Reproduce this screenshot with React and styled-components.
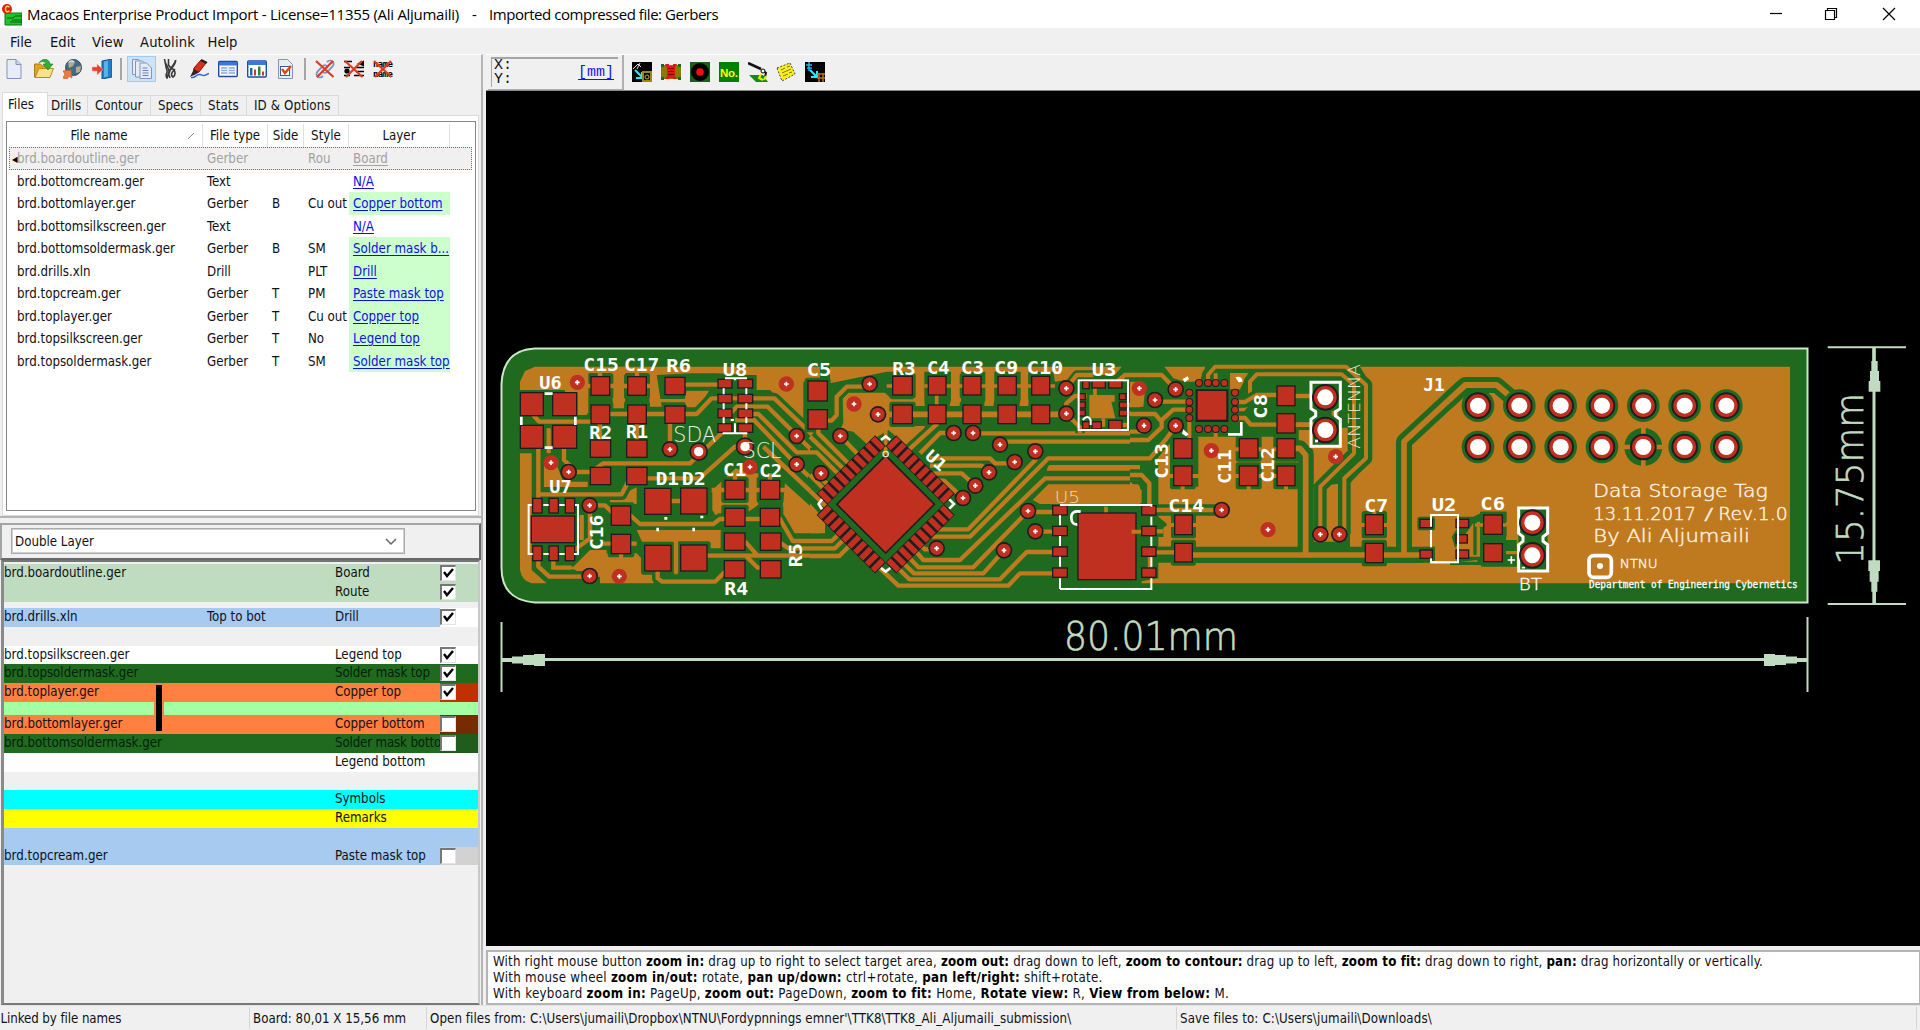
import React from 'react';
import styled, { createGlobalStyle } from 'styled-components';

const Global = createGlobalStyle`
  * { box-sizing: border-box; }
  body { margin: 0; background: #f0f0f0; overflow: hidden; }
`;
const ui = `'DejaVu Sans Condensed', 'DejaVu Sans', sans-serif`;

const Window = styled.div`
  width: 1920px; height: 1030px; display: flex; flex-direction: column;
  background: #f0f0f0; color: #101018; font: 13.2px ${ui}; font-stretch: condensed; white-space: pre;
`;
const TitleBar = styled.header`
  height: 28px; background: #fff; display: flex; align-items: center; padding-left: 2px; color: #000;
  font: 15px 'Open Sans', 'Noto Sans', sans-serif;
`;
const AppTitle = styled.span`margin-left: 5px; letter-spacing: ${p => p.$ls || 0}px; width: ${p => p.$w}px;`;
const Controls = styled.div`margin-left: auto; margin-right: 3px; display: flex; svg { width: 56.5px; height: 28px; }`;
const MenuBar = styled.nav`height: 26px; display: flex; align-items: center; padding-left: 10px; font-size: 14.6px;`;
const MenuItem = styled.span`width: ${p => p.$w}px; letter-spacing: ${p => p.$ls || 0}px;`;
const Body = styled.main`height: 951px; display: flex;`;
const Left = styled.section`width: 483px; border-right: 2px solid #b4b4b4; display: flex; flex-direction: column; border-top: 1px solid #fff;`;
const Right = styled.section`flex: 1; margin-left: 3px; display: flex; flex-direction: column;`;
const Toolbar = styled.div`height: 37px; display: flex; align-items: flex-start; padding: 1px 0 0 1px;`;
const Tool = styled.div`
  width: 28.8px; height: 26px; display: flex; align-items: center; justify-content: center;
  background: ${p => p.$on ? '#cce4f7' : 'transparent'}; outline: ${p => p.$on ? '1px solid #99cdf5' : 'none'}; outline-offset: -1px;
  svg { width: 20px; height: 20px; }
`;
const Sep = styled.i`width: 2px; height: 22px; margin: 2px 5px 0 4px; background: #a6a6a6;`;
const Tabs = styled.div`height: 23px; display: flex; align-items: flex-end; padding-left: 2px;`;
const Tab = styled.div`
  width: ${p => p.$w}px; height: ${p => p.$on ? 24 : 20}px; margin-bottom: ${p => p.$on ? -1 : 0}px;
  background: ${p => p.$on ? '#fff' : '#f0f0f0'}; border: 1px solid #dadada; border-bottom: 0; border-left-width: ${p => p.$on ? 1 : 0}px;
  display: flex; align-items: center; padding-left: ${p => p.$on ? 5 : p.$pad || 6}px; z-index: 1; letter-spacing: ${p => p.$ls || 0}px;
`;
const Pane = styled.div`height: 401px; margin: 0 2px 0 2px; background: #fff; border: 1px solid #dadada; padding: 5px 2px 4px 3px;`;
const List = styled.div`height: 390px; border: 1px solid #828790; padding: 2px 2px; background: #fff;`;
const cols = '194px 65px 36px 45px 101px 1fr';
const Head = styled.div`display: grid; grid-template-columns: ${cols}; height: 23px;`;
const HeadCell = styled.div`
  display: flex; align-items: center; justify-content: center; border-right: 1px solid #e0e0e0;
  padding-left: ${p => p.$pl || 0}px; svg { margin-left: 59px; }
`;
const Row = styled.div`
  display: grid; grid-template-columns: ${cols}; height: 22.52px; line-height: 23px; margin-right: 1px;
  ${p => p.$sel && 'background:#f0f0f0; color:#a2a2a2; outline:1px dotted #1785e0; outline-offset:-1px;'}
`;
const Cell = styled.span`padding-left: ${p => p.$pl}px; overflow: hidden; letter-spacing: ${p => p.$ls || 0}px;`;
const Mark = styled.span`color: #000; font-size: 8px; line-height: 1; margin-left: -5px; display: inline-block; width: 5px; vertical-align: 1px;`;
const LayerCell = styled.span`
  padding-left: 4px; overflow: hidden; background: ${p => p.$ok ? '#ccffcc' : 'transparent'};
  color: ${p => p.$dim ? '#a2a2a2' : '#0f0fe8'}; text-decoration: underline; text-underline-offset: 2px; letter-spacing: ${p => p.$ls || 0}px;
`;
const ComboPanel = styled.div`
  height: 37px; margin-top: 5px; border: 2px solid; border-color: #a4a4a4 #686868 #686868 #a4a4a4; padding: 3px 0 0 9px;
`;
const Divider = styled.div`height: 2px; background: #b4b4b4;`;
const Combo = styled.div`
  width: 394px; height: 26px; border: 1px solid #ababab; outline: 1px solid #d0d0d0; outline-offset: -2px; background: #fff; display: flex; align-items: center; padding: 1px 7px 0 3px;
  justify-content: space-between;
`;
const Layers = styled.div`
  position: relative; flex: 1; border: 2px solid; border-color: #747474 #c8c8c8 #787878 #8a8a8a; margin: 0 1px 0 1px; border-left-width: 3px; padding-top: 2px;
`;
const LRow = styled.div`
  height: ${p => p.$h || 18.76}px; background: ${p => p.$bg}; display: flex; line-height: 18px; color: ${p => p.$dark ? '#04200a' : '#101018'};
`;
const LName = styled.span`width: 203px;`;
const LMid = styled.span`width: 128px;`;
const LLayer = styled.span`width: 105px; overflow: hidden; letter-spacing: ${p => p.$ls || 0}px;`;
const Swatch = styled.span`flex: 1; background: ${p => p.$c}; padding-top: 1px;`;
const Check = styled.span`
  display: block; width: 16px; height: 16px; background: #fff; border: 1px solid #e4e4e4; border-top: 2px solid #777; border-left: 2px solid #777;
  svg { display: block; width: 12px; height: 12px; }
`;
const ViaBar = styled.i`position: absolute; left: 150px; top: 122px; width: 10px; height: 48px; background: #ff8040; border: solid #ff8040; border-width: 0 2px; &::after { content: ''; display: block; height: 46px; margin-top: 1px; background: #000; }`;
const RightBar = styled.div`height: 37px; display: flex; border-top: 1px solid #fff; border-bottom: 1px solid #888; align-items: flex-start; padding-left: 2px;`;
const Coord = styled.div`width: 136px; height: 35px; padding: 2px 4px 1px 3px; border-right: 2px solid #b0b0b0; border-bottom: 1px solid #b0b0b0; margin-right: 4px;`;
const CoordIn = styled.div`
  height: 30px; border-top: 2px solid #a6a6a6; border-left: 1px solid #a6a6a6; display: flex; justify-content: space-between; align-items: center;
  font: 15px/14px 'Liberation Mono', monospace; padding: 0 4px 0 2px;
`;
const Unit = styled.span`color: #1414f0; text-decoration: underline; text-underline-offset: 3px;`;
const RTool = styled(Tool)`align-items: flex-start; padding-top: 7px;`;
const Board = styled.div`height: 855px; background: #000; svg { display: block; }`;
const Help = styled.div`
  flex: 1; margin-top: 4px; background: #fff; border: 2px solid #b4b4b4; border-right-width: 1px; padding: 2px 0 0 5px;
`;
const HelpLine = styled.div`line-height: 16.2px; height: 16.2px; letter-spacing: ${p => p.$ls}px; b { color: #000; }`;
const Status = styled.footer`height: 25px; border-top: 1px solid #e4e4e4; display: flex; align-items: center;`;
const StatusItem = styled.span`width: ${p => p.$w}px; height: 22px; line-height: 23px; padding-left: ${p => p.$pl || 3}px; border-right: 1px solid #d6d6d6; letter-spacing: ${p => p.$ls || 0}px;`;

/* ---------- toolbar icons ---------- */
const I = ({ children }) => <svg viewBox="0 0 20 20">{children}</svg>;
const Page = ({ x = 3, y = 0, w = 14, h = 20 }) => (
  <path d={`M${x} ${y}h${w - 5}l5 5v${h - 5}h-${w}z`} fill="#e6ecf9" stroke="#8494bb" strokeWidth="1" />
);
const leftIcons = {
  neu: <I><Page x={2} y={.5} w={14} h={19} /><path d="M11 .5v5h5" fill="#c5d3ee" stroke="#8494bb" /></I>,
  open: <I><path d="M.5 18V5h6l2 2h7v11z" fill="#e3a51e" stroke="#a87a18" /><path d="M1 18.500l4-9h14.500l-3.500 9z" fill="#fbe28a" stroke="#b58a20" /><path d="M5 4C8-1 15-1 16 5h3l-5 6-5-6h3c-1-3-5-3-7-1" fill="#2fae3a" stroke="#1c741c" strokeWidth=".6" /></I>,
  globe: <I><circle cx="10.500" cy="8.500" r="8" fill="#3f6c86" stroke="#3a4a55" /><path d="M5 3q4-3 7 0l-2 4-4 2zM13 8l5-1-1 6-4 1z" fill="#b9a98e" /><path d="M6 3q3-2 5 0" stroke="#cde4f2" strokeWidth="1.500" fill="none" /><path d="M0 19l2-4-2-3 8-1 1 8-3-2-2 3z" fill="#f07a3c" stroke="#c05a22" strokeWidth=".7" /></I>,
  exit: <I><path d="M10 2l10-2v18l-10 2z" fill="#1f7fc8" stroke="#12558c" /><path d="M12 2.500l4-.8v15.600l-4 1.200z" fill="#58b2ea" /><path d="M0 8h5V5l6 5.500L5 16v-4H0z" fill="#e8402e" stroke="#f6b0a8" strokeWidth=".5" /></I>,
  docs: <I><Page x={.5} y={.5} w={11} h={15} /><Page x={3.5} y={2} w={12} h={16} /><Page x={8} y={4} w={11.5} h={15.5} /><path d="M10.500 9h5M10.500 11.500h6M10.500 14h6M10.500 16.500h6" stroke="#6880b8" /></I>,
  drill: <I><path d="M4.500 0c0 6 5 8 4.500 13l-2 6c-3-4 2-5-.5-9zM8.500 0v6l3 4M15.500 1c0 4-4 6-5 9M15.500 1c1 6-8 9-6.500 15l1 3M11 9c5 2 5 7 2 9-3-2-1-5 2-8" fill="none" stroke="#3a3a3a" strokeWidth="1.600" /></I>,
  pen: <I><path d="M5 9L12 1l5 3-7 9-6 3z" fill="#d8301c" stroke="#821008" /><path d="M12.500 0l6 3-1.500 2-5.500-3z" fill="#222" /><path d="M5 10l5 3-9 5z" fill="#2a2a2a" /><path d="M2 18.500c5 1 5-4 9-3s3 2 9-1" fill="none" stroke="#2f6ad0" strokeWidth="1.500" /></I>,
  table: <I><rect x=".7" y="2.500" width="18.600" height="15" rx="1" fill="#fff" stroke="#1c4fa0" strokeWidth="1.400" /><path d="M1 3h18v3.500H1z" fill="#3a78d8" /><path d="M3 9h6M3 11.500h6M3 14h6M11 9h6M11 11.500h6M11 14h6" stroke="#8ba8d8" strokeWidth="1.300" /><path d="M10 7v10" stroke="#c3d2ee" /></I>,
  chart: <I><rect x=".7" y="2" width="18.600" height="16" rx="1" fill="#fff" stroke="#1c4fa0" strokeWidth="1.400" /><path d="M1 2.500h18v3.500H1z" fill="#3a78d8" /><path d="M3 16.500V9h2.500v7.500z" fill="#1e6c9a" /><path d="M7 16.500v-6h2v6zM15 16.500v-4h2v4z" fill="#c83a2a" /><path d="M11 16.500v-9h2.500v9z" fill="#34803a" /></I>,
  check: <I><Page x={2.5} y={.5} w={14} h={19} /><rect x="4.500" y="7.500" width="9" height="9" fill="#fff" stroke="#3a5a98" /><path d="M6 10l3 4 6-7" fill="none" stroke="#e2431a" strokeWidth="2.400" /></I>,
};
const Cross = () => <path d="M1 2l17.500 16M18 2L2 18" stroke="#dc3c1e" strokeWidth="2.200" />;
leftIcons.unlink = <I><path d="M12 3c4-4 9 1 5 5l-5 5c-2 2-5 0-4-2M8 17c-4 4-9-1-5-5l5-5c2-2 5 0 4 2" fill="none" stroke="#7d92c4" strokeWidth="1.800" /><Cross /></I>;
leftIcons.unfile = <I><path d="M0 2.500h8M0 8.500h6M12 8.500h8M12 12.500h8M10 16.500h10M0 16.500h6" stroke="#000" strokeWidth="1.600" /><circle cx="3" cy="12" r="2.600" /><path d="M13 4.500l7-3v6z" /><Cross /></I>;
leftIcons.unname = <I><g fontFamily="DejaVu Sans Mono" fontWeight="700" fontSize="9"><text x="0" y="8" textLength="20">name</text><text x="0" y="17.500" textLength="20">name</text></g><Cross /></I>;

const rightIcons = [
  <I key="a"><path d="M0 0h20v20H0z" /><path d="M1 7l5-5 3 3M8 1l-3 6" stroke="#ddd" fill="none" /><path d="M3 8l7 7M10 10v6H4" stroke="#2ef" strokeWidth="2" fill="none" /><rect x="11" y="10" width="8" height="9" fill="none" stroke="#9a8a00" strokeWidth="2" /><circle cx="15" cy="15" r="2" fill="none" stroke="#c8b420" /></I>,
  <I key="b"><path d="M0 3h20v14H0z" fill="#8a7a00" /><path d="M0 2h3v3H0zM17 2h3v3h-3zM0 15h3v3H0zM17 15h3v3h-3z" fill="#176c20" /><path d="M4 2h4v2h4V2h4l-2 4v8l2 3h-4v-1H8v1H4l2-3V6z" fill="#e31515" /><path d="M7 6.500h6M7 9.500h6M7 12.500h6" stroke="#850000" /></I>,
  <I key="c"><path d="M0 0h20v20H0z" fill="#18601c" /><circle cx="10" cy="10" r="9" /><circle cx="10" cy="10" r="3.800" fill="#f01010" /></I>,
  <I key="d"><path d="M0 0h20v20H0z" fill="#008000" /><text x="1" y="14.500" fontFamily="Liberation Sans" fontWeight="700" fontSize="11.500" fill="#ff0" textLength="18">No.</text></I>,
  <I key="e"><path d="M1 13h14l5 7H8z" fill="#118a22" /><path d="M0 1l13 6" fill="none" stroke="#111" strokeWidth="2.600" /><path d="M14 8l4 3-1 4" stroke="#111" strokeWidth="2" fill="none" /><circle cx="15" cy="9" r="2" fill="#fff" stroke="#000" /><path d="M13 12l-2 4 4 2M18 14l-2 4" fill="none" stroke="#e8e800" strokeWidth="2" /></I>,
  <I key="f"><path d="M1 6L14 1l5 11L6 19z" fill="#f8f020" stroke="#444" strokeDasharray="2 1.500" /><path d="M5 8l4-2M11 5l3-1M6 11l9-4M7 14l5-2M13 11l3-1" stroke="#807800" /></I>,
  <I key="g"><path d="M0 0h20v20H0z" /><path d="M4 0v9M1 3h6M2 6h5" stroke="#2be" strokeWidth="1.400" /><path d="M5 8l6 6M12 9v6H6" stroke="#2ef" strokeWidth="2" fill="none" /><path d="M12 12h8M12 16h8M14 11v9M18 11v9" stroke="#c06a28" strokeWidth="1.500" /></I>,
];

/* ---------- board drawing ---------- */
const CU = '#bf7a1f', GR = '#206a20', RD = '#c03020', DK = '#201c20', DIM = '#c0dcc0';

const Pads = ({ list }) => (
  <>
    {list.map(([x, y, w, h], i) => <rect key={'d' + i} x={x - 4} y={y - 4} width={w + 8} height={h + 8} fill={DK} />)}
    {list.map(([x, y, w, h], i) => <rect key={i} x={x} y={y} width={w} height={h} fill={RD} />)}
  </>
);
const Vias = ({ list }) => list.map(([x, y, bare], i) => (
  <g key={i}>
    {!bare && <circle cx={x} cy={y} r="25" fill={DK} />}
    <circle cx={x} cy={y} r={bare ? 23 : 20} fill={RD} />
    <path d={`M${x - 7} ${y}h14M${x} ${y - 7}v14`} stroke="#fff" strokeWidth="5" />
  </g>
));
const Halos = ({ list, g = 15 }) => list.map(([x, y, w, h], i) => (
  <rect key={i} x={x - g} y={y - g} width={w + 2 * g} height={h + 2 * g} rx="8" fill={GR} />
));
const Traces = ({ d, w = 13, halo }) => (
  <g fill="none" strokeLinejoin="round">
    {halo && <path d={d} stroke={GR} strokeWidth={halo} />}
    <path d={d} stroke={CU} strokeWidth={w} />
  </g>
);
/* x, y = left end of the baseline; h = cap height; w = run length */
const Silk = ({ x, y, w, h = 37, thin, rot, wt, fill = '#fff', children }) => (
  <text x="0" y="0" transform={`translate(${x} ${y})${rot ? ` rotate(${rot})` : ''}`} textLength={w} lengthAdjust="spacingAndGlyphs"
    fontSize={h / 0.729} fill={fill} fontFamily={thin ? "'DejaVu Sans Light', 'DejaVu Sans', sans-serif" : "'DejaVu Sans Mono', monospace"}
    fontWeight={wt || (thin ? 200 : 700)}>{children}</text>
);
const Section = ({ x, children }) => <g transform={`translate(${x} 340) scale(.33333)`}>{children}</g>;

const padsA = [
  [93, 160, 65, 65], [190, 160, 68, 65], [93, 258, 65, 65], [190, 258, 68, 65],
  [305, 112, 52, 52], [305, 197, 52, 52], [415, 112, 52, 52], [415, 197, 52, 52],
  [527, 114, 56, 48], [527, 200, 56, 48], [303, 302, 57, 48], [303, 384, 57, 48], [412, 302, 57, 48], [412, 384, 57, 48],
  [366, 500, 54, 54], [366, 585, 54, 54], [466, 447, 75, 74], [466, 618, 75, 73], [574, 446, 75, 74], [574, 617, 75, 74],
  [707, 423, 56, 53], [813, 423, 54, 53], [707, 507, 56, 50], [813, 507, 54, 50],
  [705, 581, 58, 48], [813, 581, 58, 48], [705, 664, 58, 48], [813, 664, 58, 48],
];
const smallA = [
  ...[120, 165, 209, 253].flatMap(y => [[686, y, 38, 22], [746, y, 40, 22]]),
  [130, 477, 24, 40], [179, 477, 24, 40], [228, 477, 24, 40], [126, 530, 126, 76], [130, 620, 24, 40], [179, 620, 24, 40], [228, 620, 24, 40],
];
const viasA = [[262, 127, 1], [540, 328], [183, 368, 1], [236, 396], [299, 496], [299, 708], [388, 709, 1], [889, 132, 1], [920, 288], [920, 373], [780, 381, 1], [993, 400]];
const padsB = [[-4, 125, 54, 56], [-4, 211, 54, 54], ...[[250, 55], [357, 49], [461, 50], [566, 51], [667, 50]].flatMap(([x, w]) => [[x, 111, w, 52], [x, 197, w, 52]])];
const smallB = [
  [730, 499, 40, 24], [730, 561, 40, 24], [730, 623, 40, 24], [730, 686, 40, 24], [806, 521, 170, 196],
  [820, 126, 16, 18], [848, 124, 36, 18], [898, 124, 36, 18], [820, 247, 16, 18], [848, 247, 24, 18], [898, 243, 36, 24],
  [808, 163, 16, 14], [808, 188, 16, 14], [808, 212, 16, 14], [930, 163, 16, 14], [930, 188, 22, 14], [930, 212, 22, 14],
];
const viasB = [[179, 132], [132, 192, 1], [204, 223], [91, 288], [33, 400], [431, 279], [489, 279], [570, 314], [614, 366], [676, 334], [537, 397], [496, 437], [459, 474], [654, 513], [676, 574], [582, 631], [380, 625], [769, 145], [769, 221]];
const padsC = [[133, 298, 51, 55], [133, 380, 51, 55], [443, 140, 50, 55], [443, 223, 50, 54], [330, 298, 52, 54], [330, 380, 52, 55], [443, 298, 50, 54], [443, 380, 50, 55], [136, 527, 49, 55], [136, 612, 49, 52], [708, 526, 50, 56], [708, 612, 50, 54]];
const smallC = [[37, 499, 39, 24], [37, 561, 39, 24], [37, 623, 39, 24], [37, 686, 39, 24], [872, 540, 33, 21], [872, 632, 33, 21]];
const viasC = [[28, 145, 1], [75, 180], [137, 148], [42, 257], [137, 257], [244, 332, 1], [617, 350, 1], [275, 510], [414, 569, 1], [571, 583], [628, 583]];
const padsD = [[103, 527, 52, 54], [103, 613, 52, 50]];
const smallD = [[20, 540, 34, 21], [20, 586, 30, 21], [20, 632, 34, 21]];
const pinX = [84, 208, 332, 456, 580, 704, 829];

const Pin = ({ x, y, r = 34 }) => <g><circle cx={x} cy={y} r={r + 6} fill={DK} /><circle cx={x} cy={y} r={r} fill={RD} /><circle cx={x} cy={y} r="24" fill="#fff" /></g>;

const Pcb = () => (
  <svg width="1434" height="854" viewBox="486 91 1434 854">
    <path d="M535 348.500H1807.500V602.500H535Q501.500 600 501.500 568V384Q503 350 535 348.500z" fill={GR} stroke="#c8e8c8" strokeWidth="2" />
    {/* copper pours */}
    <Section x={490}>
      <g fill={CU}>
        <path d="M90 125l15-32 30-13H990V125H940V240L840 150H800V105H775L680 100H600L500 105 515 200H478V105H405V207H368V105H292V225H262V160H225V150H90z" />
        <path d="M590 152h67l-30 50h-35l-8-15h-90v-10h90zM90 340h35V690l45 40H125q-30-8-35-40zM162 375h38l20 50h73v16H162zM190 680h60l50-50h50v30h60l55 35v15H300l-50-22h-60zM440 570H695V625H655V700h-60v-82h-45l15 85h-15l-15-40-80-60zM775 400h30v95l-30 20-15-20v60h-65l-28-45v-60l70-65zM885 430l105 95v55h-90l-25-45zM360 480l80-38v50h-80zM330 640h110l60 65-10 25H330z" />
      </g>
      <Halos list={padsA.slice(4, 8)} g={13} />
      <Halos list={padsA.slice(14, 28)} g={13} />
      <path d="M400 80V105M290 90v130" stroke={CU} strokeWidth="10" />
      <Traces halo={34} d="M130 225L147 245H325M325 222H620L665 175H760M583 134H720M760 175H853L1010 325M720 222L740 200H833L1010 375M765 222H805L920 337H990M735 240H792L920 375 990 440M765 265V320H735L640 405 630 415H420L395 463H145M303 396L340 370H600L626 345 700 275M145 320V475M176 265V340M222 325V360L260 396H310M145 655V680L178 710H299M299 496H345L370 520M420 525L450 552H670L690 537H870L908 603H990M765 604L803 647H650M870 608L895 625H990M650 647H990M765 645L803 683H830M503 690V715L517 725H675L705 695M240 640L300 595V520M820 320L1000 490" />
      <path d="M540 250V325M558 600V700M330 90V115M441 90V115M283 138H500M190 660V683H245M735 400V425M840 400V425M665 450H890M275 525V600M330 225V300M441 225V300M540 483H575M393 635V655M340 611H440" stroke={CU} strokeWidth="13" fill="none" />
      <Pads list={padsA} /><Pads list={smallA} /><Vias list={viasA} />
      {[[626, 335], [765, 320]].map(([x, y]) => <g key={x}><circle cx={x} cy={y} r="28" fill={DK} /><circle cx={x} cy={y} r="23" fill={RD} /><circle cx={x} cy={y} r="14" fill="#fff" /></g>)}
      <g stroke="#fff" fill="none" strokeWidth="6">
        <path d="M164 161h24M164 323h24M94 230v25M256 230v25" strokeWidth="8" />
        <path d="M705 115h66M698 280h74M735 115v6M701 145v18M769 145v18M701 190v18M769 190v18M701 232v18M769 232v18M735 250v28M722 240h10" />
        <path d="M125 495h-9V642h12M160 495h16M208 495h16M255 495h9V642h-12M160 642h16M208 642h16" />
        <path d="M503 563v11M611 563v11M523 535h9M631 531h9" strokeWidth="8" />
      </g>
      <Silk x={148} y={146} w={67}>U6</Silk><Silk x={280} y={94} w={107}>C15</Silk><Silk x={402} y={94} w={106}>C17</Silk>
      <Silk x={529} y={97} w={74}>R6</Silk><Silk x={698} y={108} w={74}>U8</Silk><Silk x={298} y={297} w={68}>R2</Silk><Silk x={408} y={294} w={66}>R1</Silk>
      <Silk x={550} y={305} w={128} h={48} thin fill="#e8f0e0">SDA</Silk><Silk x={758} y={353} w={116} h={48} thin fill="#e8f0e0">SCL</Silk>
      <Silk x={699} y={409} w={70}>C1</Silk><Silk x={808} y={411} w={68}>C2</Silk><Silk x={497} y={435} w={70}>D1</Silk><Silk x={575} y={435} w={72}>D2</Silk>
      <Silk x={178} y={458} w={67}>U7</Silk><Silk x={338} y={630} w={106} rot={-90}>C16</Silk><Silk x={937} y={682} w={72} rot={-90}>R5</Silk><Silk x={703} y={765} w={72}>R4</Silk>
    </Section>
    <Section x={810}>
      <g fill={CU}>
        <path d="M60 80H935L915 105H855L735 125 730 95H655V180l3 18H626l6-18V95H553V180l-3 18H520l6-18V95H453V180l-2 18H418l5-18V95H343V183l2 15H310V95H230L60 130z" />
        <path d="M98 175l18-17H225l20 20h75v20h-75v60h100l-5 20-45 42-60-50-35 22-20 28-50-45-38-7 8-20zM715 375H990v17H710zM715 433H985l5 8V492H690l-22-12zM0 490l45 50v40H0zM838 165h76v20h-10l12 50h-78z" />
      </g>
      <Halos list={padsB} g={12} />
      <Traces halo={33} d="M179 140H110L80 170V225L65 242H40M489 280H990M431 279H390L330 340M570 305H990M360 355H540L555 370H614M360 377H515L537 397M370 400H455L496 437M375 422H402L459 474M676 334V360L475 568H385M990 355H715L480 590H365M990 415H705L450 660H340L310 625M654 513L490 682H325L285 640M582 631L520 700H312L265 655M740 636H650L570 718H298L245 665M740 700H630L595 737H265L205 680M383 250L290 335M654 516H740M676 575H740M380 628H345L320 605" />
      <Traces halo={28} d="M0 290L120 405M25 265V280L135 390M0 337H20L105 422M91 288L160 360M33 400V415L75 455M0 405L65 470M0 453L60 510M0 603H65L100 570M0 625H75L115 585M0 648H88L130 605M769 221L810 262V280M769 200V190L795 168H830M769 145L800 105H850M915 130L945 105H990M930 195H990M930 220H990M930 255H955" />
      <path d="M204 223H790" stroke={CU} strokeWidth="17" />
      <path d="M343 138H735M227 270V360M880 235V260M855 140V170M888 500V525M230 138H250M380 165V200" stroke={CU} strokeWidth="11" />
      <g transform="translate(227 493) rotate(45)">
        {[0, 90, 180, 270].map(a => (
          <g key={a} transform={`rotate(${a})`}>
            <rect x="-124" y="-169" width="248" height="46" fill={DK} />
            {Array.from({ length: 10 }, (_, i) => <rect key={i} x={-121 + i * 25} y="-167" width="17" height="42" fill={RD} />)}
          </g>
        ))}
        <rect x="-106" y="-106" width="212" height="212" fill={DK} /><rect x="-101" y="-101" width="202" height="202" fill={RD} />
      </g>
      <Pads list={padsB} /><Pads list={smallB} /><Vias list={viasB} />
      <g stroke="#fff" fill="none" strokeWidth="6">
        <path d="M213 300l14-11 14 11M213 684l14 11 14-11M36 478l-10 14 10 16M418 478l14 14-14 14" strokeWidth="8" />
        <circle cx="227" cy="342" r="8" stroke="#ddd" strokeWidth="4" />
        <rect x="806" y="121" width="148" height="149" /><path d="M818 240q15-18 24 0v15" />
        <path d="M750 495H1024M750 747H1024M750 747V715M750 680v-30M750 618v-30M750 556v-30" />
        <path d="M812 515q-30-5-28 20 2 20 18 18" strokeWidth="8" />
      </g>
      <Silk x={-10} y={107} w={74}>C5</Silk><Silk x={247} y={105} w={70}>R3</Silk><Silk x={351} y={102} w={68}>C4</Silk><Silk x={453} y={102} w={69}>C3</Silk>
      <Silk x={553} y={102} w={72}>C9</Silk><Silk x={650} y={102} w={110}>C10</Silk><Silk x={845} y={109} w={74}>U3</Silk>
      <Silk x={342} y={352} w={66} h={36} rot={42}>U1</Silk><Silk x={734} y={490} w={76} h={36} thin fill="#f0dcc0">U5</Silk>
    </Section>
    <Section x={1130}>
      <g fill={CU}>
        <path d="M103 80H225V100L200 125H165L130 115zM300 98h55l-25 50h-30zM0 125h25l20 25-5 50H0zM690 80H990V620H660V430L720 365V130zM505 270h35l150-10V330L550 435V330L505 300z" />
        <path d="M205 290H505V620H85V570L115 555 85 530V365H0V370h60l60-60V440h85zM550 440L640 430V605H550zM35 724L85 715V668H990V730H35zM0 425l35 25v40H0z" />
      </g>
      <Halos list={padsC} g={13} /><Halos list={smallC.slice(4)} g={10} />
      <Traces w={17} halo={48} d="M160 645H880M490 325H510L527 345V640M822 640V305L1000 140" />
      <Traces w={12} halo={38} d="M571 583V440L672 340V135L635 103H380L360 125V180L340 208H315M643 583V415L708 355V135L648 80H255L234 105V130" />
      <Traces halo={34} d="M0 105H95L137 148M75 185H178M178 209H130L90 245M0 222H75L95 245V262L55 300H0M137 257L110 295 60 355H0M42 275H0M315 186H345L380 165H440M315 234H345L362 254H443M0 405H35L58 430V500M75 510H275M75 574H100M60 637H160M60 640V690" />
      <path d="M493 168H545M493 254H545M257 270V330M244 328H440M207 100V130M257 100V130M178 240V300M110 408H133M184 408H455M158 435V455M356 435V455M468 435V455M110 555H210M690 555H775M733 500V530M5 575H40" stroke={CU} strokeWidth="12" fill="none" />
      <Pads list={padsC} /><Pads list={smallC} />
      <rect x="197" y="148" width="98" height="98" fill={DK} /><rect x="203" y="153" width="86" height="86" fill={RD} />
      {[207, 234, 257, 283].flatMap(x => [[x, 129], [x, 267]]).concat([158, 186, 209, 234].flatMap(y => [[178, y], [315, y]])).map(([x, y]) => <g key={x + '-' + y}><circle cx={x} cy={y} r="12" fill={DK} /><circle cx={x} cy={y} r="9" fill={RD} /></g>)}
      <Vias list={viasC} />
      <rect x="548" y="132" width="80" height="184" fill={GR} />
      <path d="M500 168h60M500 254h60M605 220h20" stroke={CU} strokeWidth="14" />
      <path d="M543 127H631V206L616 215V228L631 238V319H543V238L557 228V215L543 206z" fill="none" stroke="#fff" strokeWidth="9" />
      <Pin x={586} y={172} /><Pin x={586} y={270} />
      <path d="M555 303h9" stroke="#fff" strokeWidth="8" />
      <path d="M158 117l15-8 4 8-13 10zM316 112q20-6 22 13l-12 2zM160 268l16 15-8 6-12-8z" fill="#fff" />
      <path d="M294 283H334V246" stroke="#fff" strokeWidth="8" fill="none" />
      <path d="M903 560V525H985V545M903 570V622M903 655V667H985V655" stroke="#fff" strokeWidth="6" fill="none" />
      <path d="M0 495H64V500M64 530V556M64 590V618M64 652V680M64 715V747H0" stroke="#fff" strokeWidth="6" fill="none" />
      <Silk x={411} y={236} w={74} rot={-90}>C8</Silk><Silk x={113} y={416} w={106} rot={-90}>C13</Silk><Silk x={303} y={432} w={104} rot={-90}>C11</Silk><Silk x={431} y={428} w={106} rot={-90}>C12</Silk>
      <Silk x={115} y={517} w={108}>C14</Silk><Silk x={703} y={515} w={72}>C7</Silk><Silk x={905} y={512} w={74}>U2</Silk><Silk x={880} y={153} w={64}>J1</Silk>
      <Silk x={689} y={326} w={254} h={35} thin rot={-90} fill="#f3ead8">ANTENNA</Silk>
    </Section>
    <Section x={1450}>
      <path d="M25 80H1020V730H25z" fill={CU} />
      <Traces w={18} halo={48} d="M-5 182L46 135H140L205 190" />
      {pinX.flatMap(x => [197, 321].map(y => <g key={x + '-' + y}><circle cx={x} cy={y} r={x === 580 && y === 321 ? 57 : 49} fill={GR} />{x === 580 && y === 321 && <path d="M580 262v118M522 321h116" stroke={CU} strokeWidth="14" />}<Pin x={x} y={y} /></g>))}
      <path d="M0 670V530H70L100 515H170V600H200V680H95L80 660z" fill={GR} />
      <path d="M70 550L85 565V645H0M-40 530H18V560L0 590 15 640V660H-40zM85 595H180M150 638H215M80 550H180" fill={CU} stroke={CU} strokeWidth="10" />
      <path d="M75 545V645M0 670h90" stroke={GR} strokeWidth="10" />
      <rect x="205" y="503" width="88" height="190" fill={GR} />
      <path d="M206 504H293V580L279 590V604L293 614V693H206V614L219 604V590L206 580z" fill="none" stroke="#fff" strokeWidth="9" />
      <Pin x={247} y={548} /><Pin x={247} y={646} />
      <rect x="90" y="515" width="78" height="160" fill={GR} /><path d="M75 555h95" stroke={CU} strokeWidth="10" />
      <Pads list={padsD} /><Pads list={smallD} />
      <path d="M-57 525H24V667H-57" fill="none" stroke="#fff" strokeWidth="6" />
      <path d="M173 660h22M184 649v22M215 683h10" stroke="#fff" strokeWidth="5" />
      <rect x="417" y="647" width="67" height="65" rx="14" fill="none" stroke="#fff" strokeWidth="11" /><circle cx="450" cy="678" r="9" fill="#fff" />
      <Silk x={91} y={510} w={74}>C6</Silk><g stroke="#fff" strokeWidth="1"><Silk x={206} y={750} w={70} h={36} thin>BT</Silk></g>
      <g stroke="#fff3e0" strokeWidth="1.200">
        <Silk x={430} y={470} w={523} h={40} thin fill="#fff3e0">Data Storage Tag</Silk>
        <Silk x={430} y={539} w={308} h={37} thin fill="#fff3e0">13.11.2017</Silk><Silk x={763} y={539} w={27} h={36} thin fill="#fff3e0">/</Silk>
        <Silk x={805} y={540} w={208} h={37} thin fill="#fff3e0">Rev.1.0</Silk>
        <Silk x={430} y={605} w={470} h={39} thin fill="#fff3e0">By Ali Aljumaili</Silk>
        <Silk x={509} y={684} w={114} h={28} thin>NTNU</Silk>
      </g>
      <g stroke="#fff" strokeWidth=".8"><Silk x={417} y={743} w={626} h={21} wt={400}>Department of Engineering Cybernetics</Silk></g>
      <g stroke={DIM} strokeWidth="2"><Silk x={1240} y={674} w={515} h={82} thin rot={-90} fill={DIM}>15.75mm</Silk></g>
      <path d="M1133 22H1368M1133 792H1368" stroke={DIM} strokeWidth="6" /><path d="M1272 22V792" stroke={DIM} strokeWidth="9" />
      <path d="M1267 25h10v38h6v30h4v30h4v32h-35v-32h4v-30h4v-30h3zM1255 661h35v32h-4v32h-4v30h-4v34h-10v-34h-4v-30h-5v-32h-4z" fill={DIM} />
    </Section>
    <g stroke={DIM} fill="none"><path d="M501.500 622V692M1807.500 617V692" strokeWidth="2" /><path d="M501 659.500H1808" strokeWidth="3" /></g>
    <path d="M502 658h10v-1.500h11v-1.500h11v-1h11v12h-11v-1h-11v-1.500h-11v-1.500h-10zM1807 658h-10v-1.500h-11v-1.500h-11v-1h-11v12h11v-1h11v-1.500h11v-1.500h10z" fill={DIM} />
    <g stroke={DIM} strokeWidth=".7"><Silk x={1064} y={650} w={174} h={29} thin fill={DIM}>80.01mm</Silk></g>
  </svg>
);

const files = [
  ['brd.boardoutline.ger', 'Gerber', '', 'Rou', 'Board', 0],
  ['brd.bottomcream.ger', 'Text', '', '', 'N/A', 0],
  ['brd.bottomlayer.ger', 'Gerber', 'B', 'Cu out', 'Copper bottom', 1],
  ['brd.bottomsilkscreen.ger', 'Text', '', '', 'N/A', 0],
  ['brd.bottomsoldermask.ger', 'Gerber', 'B', 'SM', 'Solder mask b...', 1],
  ['brd.drills.xln', 'Drill', '', 'PLT', 'Drill', 1],
  ['brd.topcream.ger', 'Gerber', 'T', 'PM', 'Paste mask top', 1],
  ['brd.toplayer.ger', 'Gerber', 'T', 'Cu out', 'Copper top', 1],
  ['brd.topsilkscreen.ger', 'Gerber', 'T', 'No', 'Legend top', 1],
  ['brd.topsoldermask.ger', 'Gerber', 'T', 'SM', 'Solder mask top', 1],
];
const G = '#f0f0f0';
const layers = [
  { bg: '#c0dcc0', n: 'brd.boardoutline.ger', l: 'Board', c: 1 },
  { bg: '#c0dcc0', l: 'Route', c: 1 },
  { bg: G, h: 6.5 },
  { bg: '#a6caf0', n: 'brd.drills.xln', m: 'Top to bot', l: 'Drill', c: 1, s: '#fff' },
  { bg: G },
  { bg: '#fff', n: 'brd.topsilkscreen.ger', l: 'Legend top', c: 1 },
  { bg: '#206a20', n: 'brd.topsoldermask.ger', l: 'Solder mask top', c: 1, dark: 1, ls: -.12 },
  { bg: '#ff8040', n: 'brd.toplayer.ger', l: 'Copper top', c: 1, s: '#c03000' },
  { bg: '#a4ffa4', h: 13.6 },
  { bg: '#ff8040', n: 'brd.bottomlayer.ger', l: 'Copper bottom', c: 2, s: '#782a00' },
  { bg: '#206a20', n: 'brd.bottomsoldermask.ger', l: 'Solder mask bottom', c: 2, s: '#205c1c', dark: 1, ls: -.15 },
  { bg: '#fff', l: 'Legend bottom' },
  { bg: G },
  { bg: '#00ffff', l: 'Symbols' },
  { bg: '#ffff00', l: 'Remarks' },
  { bg: '#a6caf0' },
  { bg: '#a6caf0', n: 'brd.topcream.ger', l: 'Paste mask top', c: 2, s: '#d2d2d2' },
];

export default function App() {
  return (
    <Window>
      <Global />
      <TitleBar>
        <svg width="20" height="24" viewBox="0 0 20 24"><path d="M3 11h17v12H3z" fill="#1fc42c" stroke="#127018" /><path d="M5 16h6l2-2h7M8 20h12M10 18h10" stroke="#0a5a14" fill="none" /><circle cx="5" cy="7" r="5" fill="#e01c10" /><path d="M7.500 5q-4-2-4 2t4 2" fill="none" stroke="#ffe34a" strokeWidth="1.500" /></svg>
        <AppTitle $ls={-.28} $w={440}>Macaos Enterprise Product Import - License=11355 (Ali Aljumaili)</AppTitle>
        <AppTitle $w={12}>-</AppTitle>
        <AppTitle $ls={-.45}>Imported compressed file: Gerbers</AppTitle>
        <Controls>
          <svg viewBox="0 0 56.5 28"><path d="M22 13.500h12" stroke="#000" strokeWidth="1.200" /></svg>
          <svg viewBox="0 0 56.5 28"><path d="M21.500 10.500h9v9h-9zM23.500 10V8.500h9v9H31" fill="none" stroke="#000" strokeWidth="1.200" /></svg>
          <svg viewBox="0 0 56.5 28"><path d="M22 8l12 12M34 8L22 20" stroke="#000" strokeWidth="1.200" /></svg>
        </Controls>
      </TitleBar>
      <MenuBar>
        <MenuItem $w={40}>File</MenuItem><MenuItem $w={42}>Edit</MenuItem><MenuItem $w={48} $ls={.1}>View</MenuItem><MenuItem $w={67.5} $ls={.15}>Autolink</MenuItem><MenuItem $w={50}>Help</MenuItem>
      </MenuBar>
      <Body>
        <Left>
          <Toolbar>
            {['neu', 'open', 'globe', 'exit'].map(k => <Tool key={k}>{leftIcons[k]}</Tool>)}
            <Sep />
            {['docs', 'drill', 'pen', 'table', 'chart', 'check'].map(k => <Tool key={k} $on={k === 'docs'}>{leftIcons[k]}</Tool>)}
            <Sep />
            {['unlink', 'unfile', 'unname'].map(k => <Tool key={k}>{leftIcons[k]}</Tool>)}
          </Toolbar>
          <Tabs>
            <Tab $w={46} $on>Files</Tab><Tab $w={40} $pad={3}>Drills</Tab><Tab $w={63} $pad={7}>Contour</Tab><Tab $w={50} $pad={7}>Specs</Tab><Tab $w={46} $pad={7} $ls={.1}>Stats</Tab><Tab $w={92} $pad={7} $ls={.12}>ID &amp; Options</Tab>
          </Tabs>
          <Pane>
            <List>
              <Head>
                <HeadCell $pl={54}>File name<svg width="8" height="8"><path d="M1 7l6-6" stroke="#888" /></svg></HeadCell>
                <HeadCell>File type</HeadCell><HeadCell>Side</HeadCell><HeadCell>Style</HeadCell><HeadCell>Layer</HeadCell>
              </Head>
              {files.map(([n, t, s, st, l, ok], i) => (
                <Row key={n} $sel={i === 0}>
                  <Cell $pl={8}>{i === 0 && <Mark>◀</Mark>}{n}</Cell><Cell $pl={4}>{t}</Cell><Cell $pl={4}>{s}</Cell><Cell $pl={4}>{st}</Cell>
                  <LayerCell $ok={ok} $dim={i === 0}>{l}</LayerCell>
                </Row>
              ))}
            </List>
          </Pane>
          <Divider />
          <ComboPanel>
            <Combo>Double Layer<svg width="12" height="8"><path d="M1 1l5 5 5-5" fill="none" stroke="#666" strokeWidth="1.500" /></svg></Combo>
          </ComboPanel>
          <Layers>
            {layers.map((r, i) => (
              <LRow key={i} $bg={r.bg} $h={r.h} $dark={r.dark}>
                <LName>{r.n}</LName><LMid>{r.m}</LMid><LLayer $ls={r.ls}>{r.l}</LLayer>
                <Swatch $c={r.s}>{r.c && <Check>{r.c === 1 && <svg viewBox="0 0 12 12"><path d="M2 5l3 4 6-7" fill="none" stroke="#000" strokeWidth="2.400" /></svg>}</Check>}</Swatch>
              </LRow>
            ))}
            <ViaBar />
          </Layers>
        </Left>
        <Right>
          <RightBar>
            <Coord><CoordIn><span>X:<br />Y:</span><Unit>[mm]</Unit></CoordIn></Coord>
            {rightIcons.map((ic, i) => <RTool key={i}>{ic}</RTool>)}
          </RightBar>
          <Board><Pcb /></Board>
          <Help>
            <HelpLine $ls={.175}>With right mouse button <b>zoom in:</b> drag up to right to select target area, <b>zoom out:</b> drag down to left, <b>zoom to contour:</b> drag up to left, <b>zoom to fit:</b> drag down to right, <b>pan:</b> drag horizontally or vertically.</HelpLine>
            <HelpLine $ls={.28}>With mouse wheel <b>zoom in/out:</b> rotate, <b>pan up/down:</b> ctrl+rotate, <b>pan left/right:</b> shift+rotate.</HelpLine>
            <HelpLine $ls={.3}>With keyboard <b>zoom in:</b> PageUp, <b>zoom out:</b> PageDown, <b>zoom to fit:</b> Home, <b>Rotate view:</b> R, <b>View from below:</b> M.</HelpLine>
          </Help>
        </Right>
      </Body>
      <Status>
        <StatusItem $w={250} $pl={.5} $ls={-.08}>Linked by file names</StatusItem>
        <StatusItem $w={177}>Board: 80,01 X 15,56 mm</StatusItem>
        <StatusItem $w={750} $ls={.07}>Open files from: C:\Users\jumaili\Dropbox\NTNU\Fordypnnings emner'\TTK8\TTK8_Ali_Aljumaili_submission\</StatusItem>
        <StatusItem $w={740} $ls={.12}>Save files to: C:\Users\jumaili\Downloads\</StatusItem>
      </Status>
    </Window>
  );
}
